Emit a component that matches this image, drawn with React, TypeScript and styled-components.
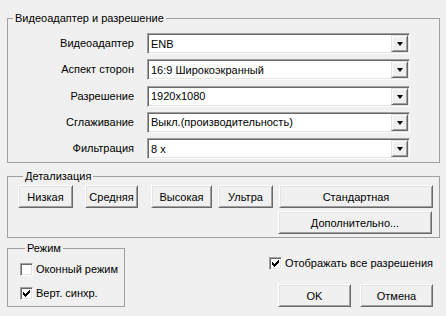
import React from 'react';
import styled, { createGlobalStyle } from 'styled-components';

const GlobalStyle = createGlobalStyle`
  html, body {
    margin: 0;
    padding: 0;
    background: #f0f0f0;
  }

  body {
    font-family: "Liberation Sans", Arial, sans-serif;
    font-size: 11px;
    color: #000;
  }
`;

const Window = styled.div`
  width: 446px;
  height: 316px;
  box-sizing: border-box;
  padding: 12px 6px 0 7px;
  display: flex;
  flex-direction: column;
  overflow: hidden;
  background: #f0f0f0;
`;

const Group = styled.fieldset<{ $pad: string; $mt?: number; $w?: number }>`
  margin: ${(p) => p.$mt || 0}px 0 0 0;
  padding: ${(p) => p.$pad};
  border: 1px solid #a0a0a0;
  min-width: 0;
  width: ${(p) => (p.$w ? `${p.$w}px` : 'auto')};
  box-sizing: border-box;
`;

const Legend = styled.legend`
  margin-left: 5px;
  padding: 0 2px;
  line-height: 13px;
  height: 13px;
`;

const FormGrid = styled.div`
  display: grid;
  grid-template-columns: 126px 263px;
  grid-auto-rows: 21px;
  column-gap: 13px;
  row-gap: 5.25px;
`;

const Label = styled.div`
  align-self: center;
  text-align: right;
  line-height: 13px;
  white-space: nowrap;
`;

const Combo = styled.div`
  position: relative;
  display: flex;
  align-items: center;
  box-sizing: border-box;
  height: 21px;
  background: #fff;
  border: 1px solid;
  border-color: #a0a0a0 #fff #fff #a0a0a0;
  box-shadow: inset 1px 1px 0 #696969, inset -1px -1px 0 #e3e3e3;
  padding: 0 20px 0 3px;
  white-space: nowrap;
`;

const DropButton = styled.div`
  position: absolute;
  top: 1px;
  right: 1px;
  width: 17px;
  height: 17px;
  box-sizing: border-box;
  background: #f0f0f0;
  border: 1px solid;
  border-color: #e3e3e3 #696969 #696969 #e3e3e3;
  box-shadow: inset 1px 1px 0 #fff, inset -1px -1px 0 #a0a0a0;
  display: flex;
  align-items: center;
  justify-content: center;
`;

const Arrow = styled.div`
  width: 0;
  height: 0;
  border-left: 3.5px solid transparent;
  border-right: 3.5px solid transparent;
  border-top: 4px solid #000;
  margin-top: 1px;
`;

const ButtonRow = styled.div`
  display: flex;
  align-items: flex-start;
`;

const Button = styled.button<{ $w: number; $ml?: number }>`
  width: ${(p) => p.$w}px;
  height: 23px;
  margin: 0 0 0 ${(p) => p.$ml || 0}px;
  padding: 0;
  box-sizing: border-box;
  font-family: "Liberation Sans", Arial, sans-serif;
  font-size: 11px;
  color: #000;
  background: #f0f0f0;
  border: 1px solid;
  border-color: #fff #696969 #696969 #fff;
  box-shadow: inset 1px 1px 0 #e3e3e3, inset -1px -1px 0 #a0a0a0;
  border-radius: 0;
  outline: none;
  cursor: default;
`;

const BottomArea = styled.div`
  display: flex;
  align-items: flex-start;
  margin-top: 4px;
`;

const CheckList = styled.div`
  display: flex;
  flex-direction: column;
  gap: 11px;
`;

const CheckRow = styled.label`
  display: flex;
  align-items: center;
  height: 13px;
  gap: 3px;
  white-space: nowrap;
  line-height: 13px;
`;

const Box = styled.span`
  display: inline-block;
  width: 13px;
  height: 13px;
  box-sizing: border-box;
  background: #fff;
  border: 1px solid;
  border-color: #a0a0a0 #fff #fff #a0a0a0;
  box-shadow: inset 1px 1px 0 #696969, inset -1px -1px 0 #e3e3e3;
  flex: none;
  position: relative;

  svg {
    position: absolute;
    left: -1px;
    top: -1px;
  }
`;

const RightPane = styled.div`
  flex: 1;
  display: flex;
  flex-direction: column;
  align-items: flex-end;
  padding: 15px 7px 0 0;
`;

const DialogButtons = styled.div`
  display: flex;
  gap: 9px;
  margin-top: 14px;
`;

const checkRuns: [number, number, number][] = [
  [3, 9, 1],
  [4, 8, 2],
  [5, 3, 1],
  [5, 7, 3],
  [6, 3, 2],
  [6, 6, 3],
  [7, 3, 5],
  [8, 4, 3],
  [9, 5, 1],
];

const CheckMark = () => (
  <svg width="13" height="13" viewBox="0 0 13 13" shapeRendering="crispEdges">
    {checkRuns.map(([y, x, w], i) => (
      <rect key={i} x={x} y={y} width={w} height={1} fill="#000" />
    ))}
  </svg>
);

const Checkbox: React.FC<{ checked?: boolean; label: string }> = ({ checked, label }) => (
  <CheckRow>
    <Box>{checked && <CheckMark />}</Box>
    <span>{label}</span>
  </CheckRow>
);

const rows = [
  { label: 'Видеоадаптер', value: 'ENB' },
  { label: 'Аспект сторон', value: '16:9 Широкоэкранный' },
  { label: 'Разрешение', value: '1920x1080' },
  { label: 'Сглаживание', value: 'Выкл.(производительность)' },
  { label: 'Фильтрация', value: '8 x' },
];

export default function App() {
  return (
    <>
      <GlobalStyle />
      <Window>
        <Group $pad="8px 0 3px 0">
          <Legend>Видеоадаптер и разрешение</Legend>
          <FormGrid>
            {rows.map((r) => (
              <React.Fragment key={r.label}>
                <Label>{r.label}</Label>
                <Combo>
                  {r.value}
                  <DropButton>
                    <Arrow />
                  </DropButton>
                </Combo>
              </React.Fragment>
            ))}
          </FormGrid>
        </Group>

        <Group $pad="2px 0 3px 10px" $mt={7}>
          <Legend>Детализация</Legend>
          <ButtonRow>
            <Button $w={55}>Низкая</Button>
            <Button $w={53} $ml={12}>Средняя</Button>
            <Button $w={61} $ml={13}>Высокая</Button>
            <Button $w={55} $ml={6}>Ультра</Button>
            <Button $w={154} $ml={6}>Стандартная</Button>
          </ButtonRow>
          <ButtonRow style={{ marginTop: 3 }}>
            <Button $w={154} $ml={260}>Дополнительно...</Button>
          </ButtonRow>
        </Group>

        <BottomArea>
          <Group $pad="8px 0 6px 12px" $w={118}>
            <Legend>Режим</Legend>
            <CheckList>
              <Checkbox label="Оконный режим" />
              <Checkbox checked label="Верт. синхр." />
            </CheckList>
          </Group>
          <RightPane>
            <Checkbox checked label="Отображать все разрешения" />
            <DialogButtons>
              <Button $w={73}>OK</Button>
              <Button $w={73}>Отмена</Button>
            </DialogButtons>
          </RightPane>
        </BottomArea>
      </Window>
    </>
  );
}
